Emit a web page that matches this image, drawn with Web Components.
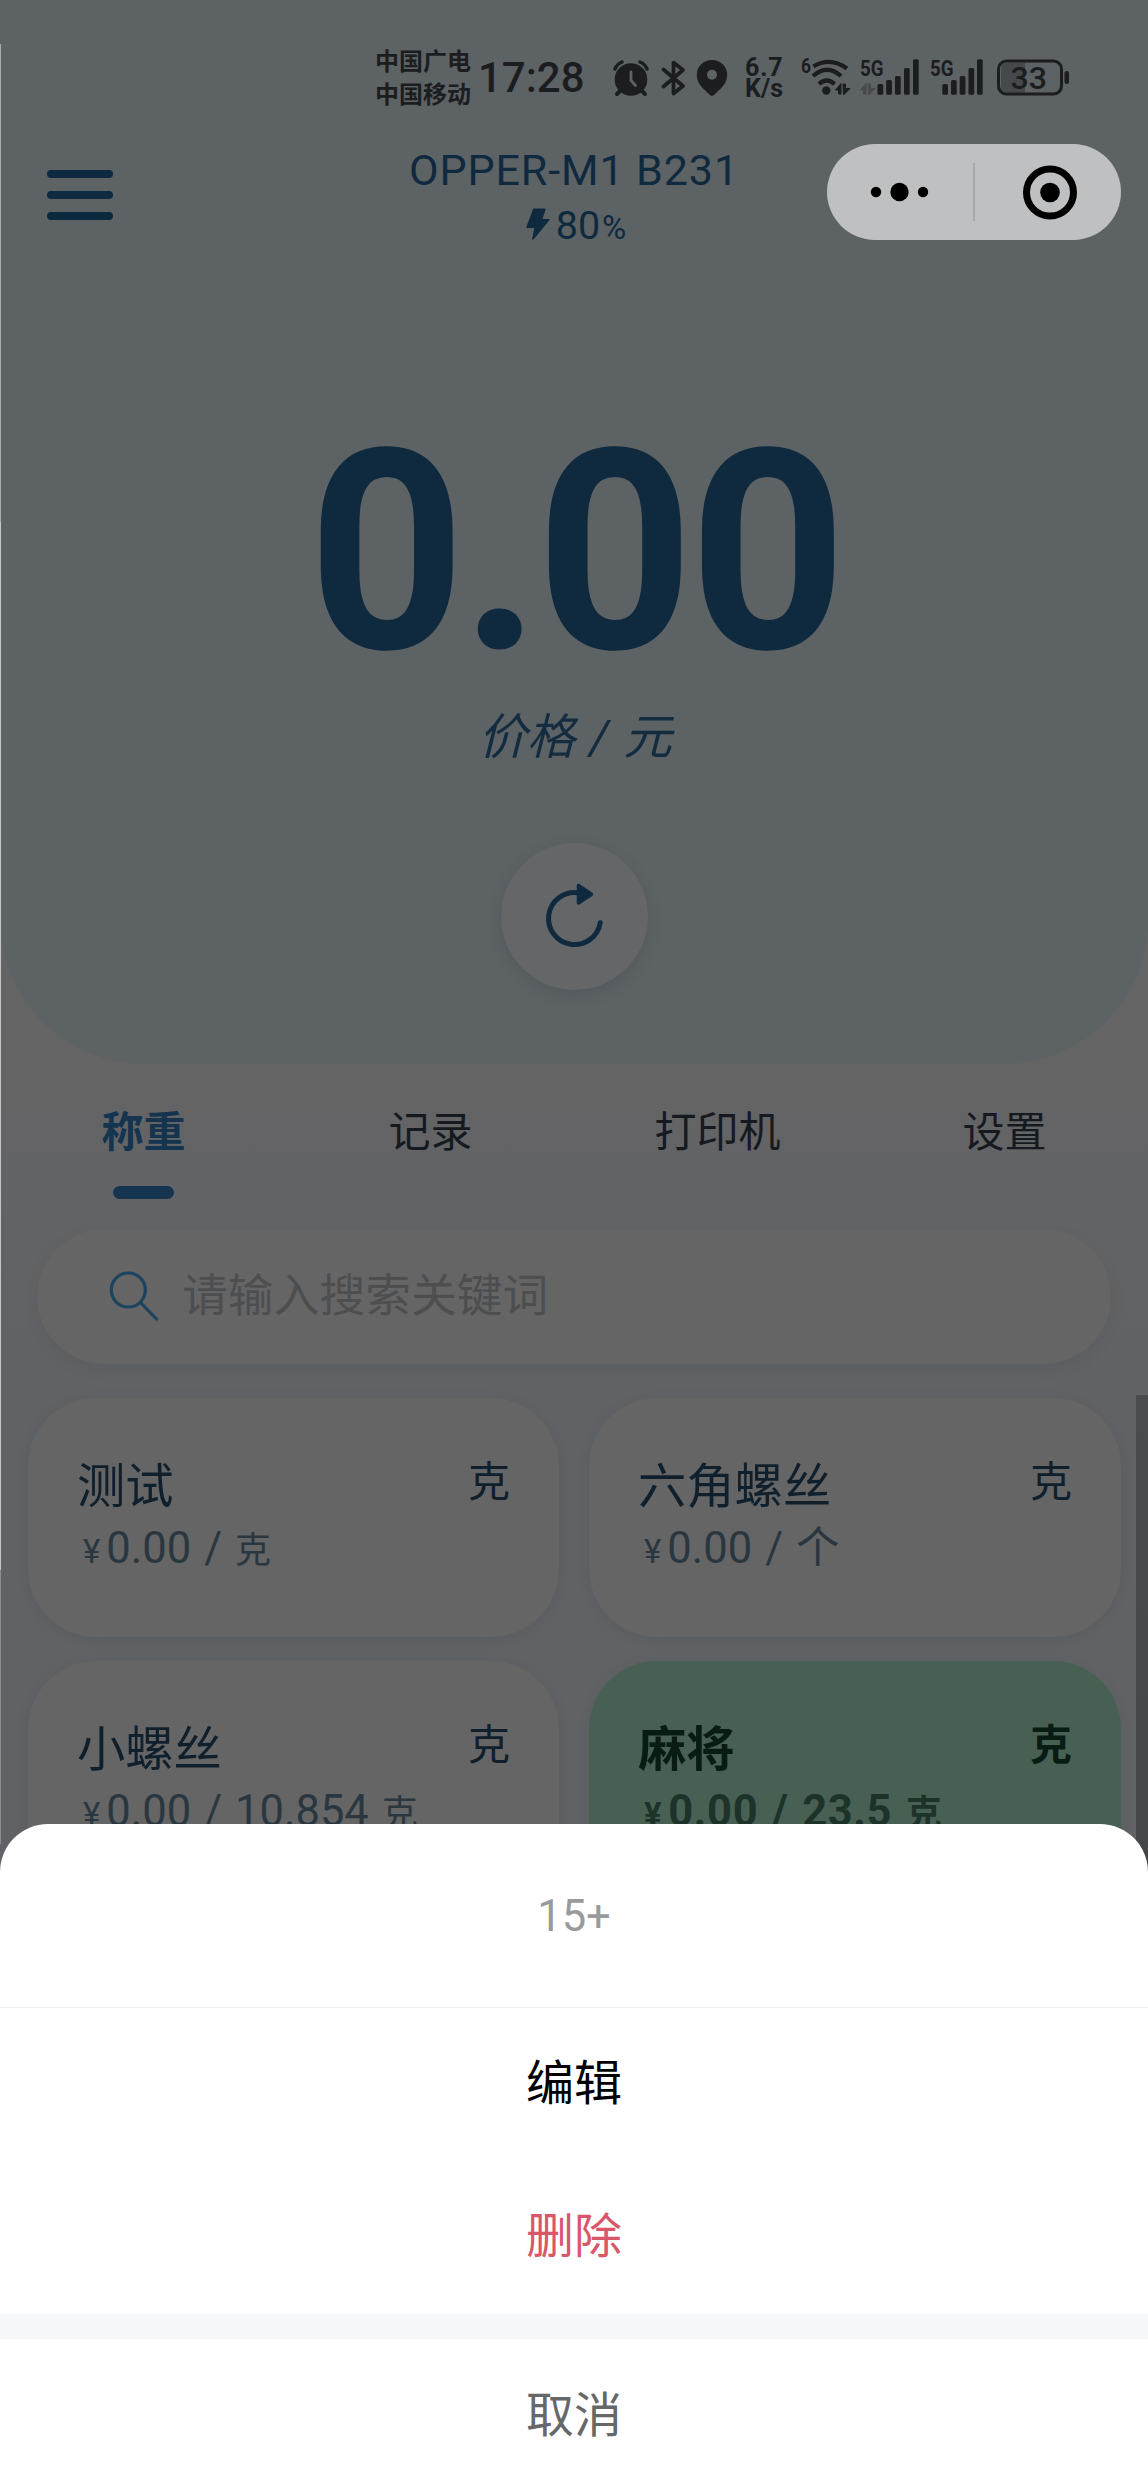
<!DOCTYPE html>
<html lang="zh-CN">
<head>
<meta charset="utf-8">
<title>OPPER-M1</title>
<style>
body{margin:0;width:1148px;height:2492px;overflow:hidden;background:#606265;font-family:Roboto,"Noto Sans CJK SC",sans-serif}
</style>
</head>
<body>
<scale-app></scale-app>
<script>
const def=(name,html)=>{
  const t=document.createElement('template');t.innerHTML=html;
  customElements.define(name,class extends HTMLElement{
    constructor(){super();this.attachShadow({mode:'open'}).append(t.content.cloneNode(true));}
  });
};

def('status-bar',`<style>
:host{display:flex;height:132px;color:#1b1d1f;font-weight:500;align-items:flex-start}
.car{margin:43px 0 0 375px;width:103px;font:700 24px/33px "Noto Sans CJK SC",sans-serif}
.car div{height:33px;white-space:nowrap}
.time{margin-top:53px;width:135px;font-size:42px;line-height:50px;letter-spacing:0;white-space:nowrap}
.ico{margin-top:56px;width:132px;height:44px;flex:none}
.net{margin-top:57px;width:56px;font-size:25px;line-height:22px;font-weight:700}
.net div{height:21px;white-space:nowrap}
.sig{margin-top:56px;width:280px;height:44px;flex:none;overflow:visible}
</style>
<div class="car"><div>中国广电</div><div>中国移动</div></div>
<div class="time">17:28</div>
<svg class="ico" viewBox="613 56 132 44" fill="currentColor">
<circle cx="631" cy="79.500" r="16.300"/><g fill="none" stroke="currentColor" stroke-linecap="round"><path d="M615 69q2-5 7-7M640 62q5 2 7 7" stroke-width="3.500"/><path d="M621 90l-4 4M641 90l4 4" stroke-width="4"/></g><path d="M631 72v8.500l4.500 5" fill="none" stroke="#5d6265" stroke-width="2.800" stroke-linecap="round"/>
<path d="M663.500 69.500L683 86l-9.500 7.500v-31l9.500 7.500-19.500 16.500" fill="none" stroke="currentColor" stroke-width="3.700" stroke-linejoin="round" stroke-linecap="round"/>
<path fill-rule="evenodd" d="M712 60c-8.500 0-15.200 6.500-15.200 15 0 10 9 15.500 12.800 19.800q2.400 2.300 4.800 0C718 90.500 727.200 85 727.200 75c0-8.500-6.700-15-15.200-15zm0 9.800a5 5 0 110 10 5 5 0 010-10z"/>
</svg>
<div class="net"><div style="letter-spacing:.8px">6.7</div><div>K/s</div></div>
<svg class="sig" viewBox="801 56 280 44" fill="currentColor" font-family="Roboto" font-weight="700">
<text x="801" y="73" font-size="21" textLength="10" lengthAdjust="spacingAndGlyphs">6</text>
<g fill="none" stroke="currentColor" stroke-width="4.200"><path d="M813.500 66.500q16.500-10 33.500 2M813 76q14-12.500 28 0M819 84q7.500-7 15.500 0"/></g><circle cx="826.300" cy="90.500" r="4.200"/>
<path d="M835.500 90l5.500-6.500V94h-2.500v-4zM843 84h2.500v4.500h4.500L843.500 95z" stroke="currentColor"/>
<text x="860" y="75.500" font-size="22" textLength="23.500" lengthAdjust="spacingAndGlyphs">5G</text>
<path d="M860.500 90l5.500-6.500V94h-2.500v-4zM868 84h2.500v4.500h4.500L868.500 95z" stroke="currentColor" opacity=".32"/>
<rect x="877.500" y="84" width="5.700" height="10.700" rx="1.500"/><rect x="886.200" y="80" width="5.700" height="14.700" rx="1.500"/><rect x="895" y="76" width="5.700" height="18.700" rx="1.500"/><rect x="904" y="68" width="5.700" height="26.700" rx="1.500"/><rect x="913" y="59.300" width="5.700" height="35.400" rx="1.500"/>
<text x="930" y="75.500" font-size="22" textLength="23.500" lengthAdjust="spacingAndGlyphs">5G</text>
<rect x="942.300" y="84" width="5.700" height="10.700" rx="1.500"/><rect x="951" y="80" width="5.700" height="14.700" rx="1.500"/><rect x="959.700" y="76" width="5.700" height="18.700" rx="1.500"/><rect x="968.500" y="68" width="5.700" height="26.700" rx="1.500"/><rect x="977" y="59.300" width="5.700" height="35.400" rx="1.500"/>
<path d="M1025 62.500v30h-17q-7 0-7-7v-16q0-7 7-7z" fill="#45494b"/>
<rect x="998.500" y="61" width="63" height="33" rx="8" fill="none" stroke="currentColor" stroke-width="3"/><rect x="1064.500" y="71" width="4.500" height="13" rx="2.200"/>
<text x="1010.500" y="89" font-size="31.500" font-weight="500" textLength="36.500" lengthAdjust="spacingAndGlyphs">33</text>
</svg>`);

def('mini-capsule',`<style>
:host{display:block;width:294px;height:96px;border-radius:48px;background:#bfc0c2}svg{display:block}
</style><svg width="294" height="96" viewBox="827 144 294 96"><circle cx="876" cy="192" r="5.200"/><circle cx="899.500" cy="192" r="9.200"/><circle cx="923" cy="192" r="5.200"/><path d="M974 163v58" stroke="#a6a7a9" stroke-width="2"/><circle cx="1050" cy="192.500" r="23.500" fill="none" stroke="#000" stroke-width="7"/><circle cx="1050" cy="192.500" r="9.800"/></svg>`);

def('nav-header',`<style>
:host{display:grid;grid-template-columns:294px 1fr 294px;padding:12px 27px 0 27px;height:112px;color:#0f293e}
.menu{display:flex;flex-direction:column;gap:13px;padding:26px 0 0 19.500px}
.menu i{display:block;width:66.500px;height:8px;border-radius:4px;background:#0f293e}
.mid{text-align:center;white-space:nowrap}
.name{font-size:43px;line-height:52px;letter-spacing:.9px;font-weight:400}
.bat{display:flex;justify-content:center;align-items:baseline;font-size:39.500px;line-height:60px;height:60px}
.bat svg{align-self:flex-start;margin:12px 6px 0 4px}.bat small{font-size:33px;margin-left:2px}
</style>
<div class="menu"><i></i><i></i><i></i></div>
<div class="mid"><div class="name">OPPER-M1 B231</div><div class="bat"><svg width="24" height="33" viewBox="0 0 24 33"><path d="M8 .5h11q1 0 .6 1L16.500 11H23q1.200 0 .6 1L7.500 31.500q-1.500 1-1.200-1L8.300 20H1.200q-1.200 0-.9-1L7 1.200Q7.200.5 8 .5z" fill="#0f293e"/></svg><span>80</span><small>%</small></div></div>
<mini-capsule></mini-capsule>`);

def('refresh-button',`<style>
:host{display:flex;width:147px;height:147px;border-radius:50%;background:#656667;box-shadow:0 5px 14px rgba(50,58,64,.22)}
</style><svg width="147" height="147" viewBox="501 843 147 147"><path d="M578 892.800a26 26 0 1 0 22.200 30" fill="none" stroke="#0f293e" stroke-width="5" stroke-linecap="round"/><path d="M578.500 885.500v17.500l13-8.800z" fill="#0f293e" stroke="#0f293e" stroke-width="3.500" stroke-linejoin="round"/></svg>`);

def('weight-hero',`<style>
:host{display:flex;flex-direction:column;align-items:center;height:1064px;background:#5d6265;border-radius:0 0 144px 144px}
status-bar,nav-header{align-self:stretch}
.v{margin-top:132px;height:328px;font-size:280px;line-height:328px;font-weight:700;letter-spacing:-4.500px;color:#0f293e;white-space:nowrap;transform:translateX(1.500px) scaleX(.98)}
.u{margin-top:-14px;height:72px;line-height:72px;font-size:48.500px;font-style:italic;word-spacing:2.500px;color:#142c40;white-space:nowrap;margin-left:2px}
refresh-button{margin-top:69px;margin-left:1px}
</style>
<status-bar></status-bar><nav-header></nav-header>
<div class="v">0.00</div><div class="u">价格 / 元</div><refresh-button></refresh-button>`);

def('tab-item',`<style>
:host{display:flex;flex-direction:column;align-items:center;flex:1;font-size:42px;line-height:60px;color:#151a20}
:host([on]){color:#14344f;font-weight:700}
i{display:none;width:61px;height:13px;border-radius:6.500px;background:#14344f;margin-top:23.500px}
:host([on]) i{display:block}
</style><span><slot></slot></span><i></i>`);

def('tab-row',`<style>:host{display:flex;height:126.500px;padding-top:38.500px}</style><slot></slot>`);

def('search-box',`<style>
:host{display:flex;align-items:center;margin:0 37px;height:135px;border-radius:68px;background:#656565;box-shadow:0 5px 12px rgba(76,80,84,.22);font-size:45.800px;color:#4d4e50}
svg{margin-left:72px;width:50px;height:54px}span{margin-left:23px;line-height:66px}
</style><svg viewBox="0 0 50 54" fill="none" stroke="#1e435e" stroke-width="3.200" stroke-linecap="round"><circle cx="19.300" cy="20" r="17"/><path d="M31.500 32.500L47.500 49"/></svg><span><slot></slot></span>`);

def('goods-card',`<style>
:host{display:block;height:239px;border-radius:68px;background:#656565;box-shadow:0 2px 9px rgba(84,88,92,.45);color:#0f1f2c;box-sizing:border-box;padding:52.500px 49px 0 49px}
:host([on]){background:#486053;color:#081c14;font-weight:700}
.t{display:flex;justify-content:space-between;height:70px}
.n{font-size:48.300px;line-height:72px}.k{font-size:42px;line-height:64px}
.p{display:flex;align-items:baseline;color:#2a3740;font-size:43.500px;line-height:56px;white-space:pre;padding-left:6px;word-spacing:2.200px}
:host([on]) .p{color:#1d332a;letter-spacing:.6px}
.y{font-size:33px;margin-right:6px}
::slotted(small){font-size:36px}
</style><div class="t"><span class="n"><slot name="name"></slot></span><span class="k">克</span></div><div class="p"><span class="y">¥</span><span><slot></slot></span></div>`);

def('goods-grid',`<style>
:host{display:grid;grid-template-columns:531px 532px;column-gap:30px;row-gap:24px;padding:34px 0 0 28px}
</style><slot></slot>`);

def('sheet-row',`<style>
:host{display:flex;align-items:center;justify-content:center;height:153px;font-size:48px;color:var(--c,#000);line-height:72px;padding-bottom:1px;box-sizing:border-box}
</style><slot></slot>`);

def('action-sheet',`<style>
:host{display:block;position:absolute;left:0;right:0;bottom:0;height:668px;background:#fff;border-radius:48px 48px 0 0;overflow:hidden}
.h{height:181px;display:flex;align-items:center;justify-content:center;font-size:43.500px;color:#999a9b;border-bottom:1px solid #f0f0f1;padding-top:2px}
.b{height:25px;background:#f6f7f9}
slot[name=cancel]{display:block;padding-top:1px}
</style><div class="h"><slot name="title"></slot></div><slot></slot><div class="b"></div><slot name="cancel"></slot>`);

def('scale-app',`<style>
:host{display:block;position:relative;width:1148px;height:2492px;overflow:hidden;background:linear-gradient(#646465 1000px,#646465 1064px,#606265 1420px)}
.edge{position:absolute;left:0;top:44px;width:1px;height:1800px;background:linear-gradient(#a4adb1 478px,#c3c7c9 478px,#c3c7c9 1526px,#8b8e90 1526px)}
.bar{position:absolute;right:0;top:1395px;width:12px;height:520px;background:linear-gradient(#4a4b4d,#444547)}
</style>
<weight-hero></weight-hero>
<tab-row><tab-item on>称重</tab-item><tab-item>记录</tab-item><tab-item>打印机</tab-item><tab-item>设置</tab-item></tab-row>
<search-box>请输入搜索关键词</search-box>
<goods-grid>
<goods-card><span slot="name">测试</span>0.00 / <small>克</small></goods-card>
<goods-card><span slot="name">六角螺丝</span>0.00 / 个</goods-card>
<goods-card><span slot="name">小螺丝</span>0.00 / 10.854 <small>克</small></goods-card>
<goods-card on><span slot="name">麻将</span>0.00 / 23.5 <small>克</small></goods-card>
</goods-grid>
<div class="bar"></div><div class="edge"></div>
<action-sheet><span slot="title">15+</span><sheet-row>编辑</sheet-row><sheet-row style="--c:#d9566b">删除</sheet-row><sheet-row slot="cancel" style="--c:#666769">取消</sheet-row></action-sheet>`);
</script>
</body>
</html>
